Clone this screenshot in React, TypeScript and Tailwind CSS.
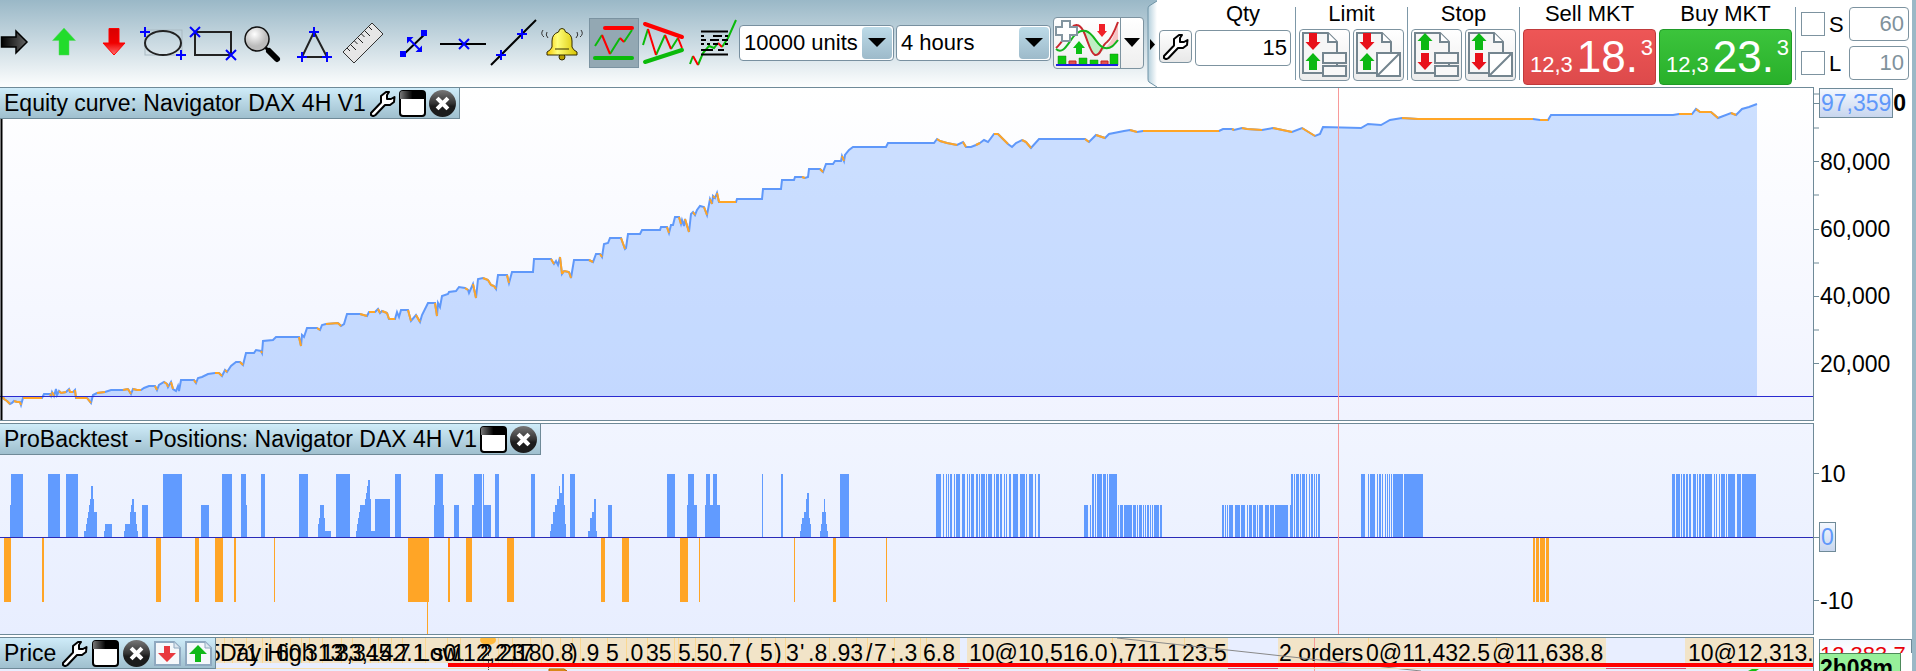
import { useState, type ReactNode } from "react";

type Point = [x: number, y: number, down?: 1];

const PLOT_WIDTH = 1813;
const START_CAPITAL_Y = 396;

// Equity line in plot units, third item marks a losing stretch
const EQUITY: Point[] = [
  [3, 397], [4, 399, 1], [7, 401, 1], [10, 404, 1], [12, 403], [14, 401], [17, 402, 1], [20, 402, 1], [21, 405, 1],
  [23, 398], [42, 398, 1], [44, 394], [50, 394], [51, 396, 1], [52, 392], [54, 396, 1], [56, 389], [57, 395],
  [59, 391], [61, 393, 1], [66, 392, 1], [69, 389], [70, 392, 1], [73, 392, 1], [75, 390], [76, 398, 1],
  [87, 398, 1], [91, 403, 1], [93, 395], [97, 393], [105, 392, 1], [111, 390], [123, 390], [128, 389, 1],
  [131, 394, 1], [133, 389], [137, 390, 1], [141, 390, 1], [144, 388], [149, 386], [155, 386], [157, 390, 1],
  [159, 385], [164, 382], [167, 384, 1], [168, 387, 1], [171, 382], [173, 389, 1], [176, 391], [178, 386],
  [179, 391], [181, 380], [194, 380], [196, 383, 1], [198, 378], [202, 377], [208, 374], [215, 373],
  [219, 373, 1], [222, 376, 1], [225, 370], [227, 372, 1], [231, 366], [236, 362], [240, 362], [243, 365, 1],
  [246, 353], [254, 353], [256, 350], [261, 351], [262, 353, 1], [263, 341], [273, 340], [276, 337], [299, 337],
  [301, 346, 1], [302, 335], [304, 337], [307, 328], [317, 328], [320, 330, 1], [322, 325], [326, 324],
  [338, 323, 1], [341, 326, 1], [344, 324], [347, 314], [360, 314], [367, 316, 1], [369, 312], [375, 312, 1],
  [378, 309], [380, 313, 1], [382, 311], [387, 313, 1], [389, 319, 1], [395, 319, 1], [397, 312], [399, 317],
  [401, 310], [408, 310], [411, 321, 1], [416, 315], [420, 322, 1], [422, 315], [428, 303], [435, 303],
  [437, 316, 1], [438, 303], [440, 307], [442, 296], [448, 294], [449, 292], [456, 291], [459, 287], [465, 288],
  [468, 290, 1], [469, 293], [473, 284], [476, 298, 1], [478, 279], [483, 278], [488, 280, 1], [491, 285, 1],
  [494, 286, 1], [496, 289, 1], [498, 275], [507, 275], [509, 283, 1], [512, 272], [533, 272], [534, 259],
  [551, 259], [554, 264, 1], [556, 261], [558, 265], [560, 257], [562, 274, 1], [564, 271, 1], [569, 272, 1],
  [571, 278, 1], [574, 260], [589, 260], [593, 262, 1], [596, 254], [600, 254], [602, 257, 1], [604, 244],
  [608, 243], [610, 238], [621, 238], [625, 249, 1], [626, 248], [628, 234], [640, 234], [642, 230], [660, 230],
  [661, 227], [667, 227], [669, 233, 1], [671, 225], [673, 225], [675, 217], [679, 217], [681, 224, 1],
  [682, 220], [684, 226], [685, 219], [689, 232, 1], [691, 214], [693, 212], [695, 215, 1], [697, 210],
  [700, 206], [704, 207], [707, 215, 1], [710, 199], [712, 204, 1], [713, 196], [715, 198, 1], [717, 193],
  [719, 202, 1], [736, 202, 1], [737, 199], [762, 199], [763, 189], [781, 189], [782, 180], [794, 180],
  [795, 177], [802, 177], [805, 178, 1], [808, 177], [809, 169], [820, 169], [823, 172, 1], [826, 164],
  [833, 164], [835, 161], [841, 161], [842, 156], [844, 161, 1], [845, 155], [849, 150], [853, 147], [886, 147],
  [888, 143], [934, 143], [937, 139], [940, 141, 1], [947, 143, 1], [957, 145, 1], [963, 142], [966, 147, 1],
  [971, 147], [976, 145], [980, 143, 1], [984, 140], [988, 142], [994, 134], [998, 134, 1], [1004, 140, 1],
  [1008, 144, 1], [1012, 147], [1016, 143], [1022, 140], [1026, 142, 1], [1031, 148, 1], [1039, 139],
  [1085, 139], [1089, 142, 1], [1096, 135], [1105, 138, 1], [1109, 134], [1124, 131], [1130, 130],
  [1137, 132, 1], [1143, 131], [1161, 131, 1], [1219, 131, 1], [1223, 129], [1232, 129], [1234, 130, 1],
  [1242, 128], [1247, 129, 1], [1262, 130, 1], [1273, 128], [1292, 132, 1], [1302, 128], [1315, 136, 1],
  [1320, 134], [1323, 127], [1361, 128], [1368, 124], [1381, 125], [1390, 120], [1402, 118], [1418, 119, 1],
  [1533, 119, 1], [1540, 120], [1548, 120, 1], [1551, 115], [1673, 115], [1679, 114], [1692, 114, 1],
  [1696, 109], [1700, 112, 1], [1711, 112, 1], [1718, 118, 1], [1731, 113], [1736, 115, 1], [1742, 109],
  [1749, 107], [1757, 104],
];

// Position bars: from, to, size
const LONGS: [number, number, number][] = [
  [10, 11, 5], [11, 23, 10], [48, 60, 10], [66, 78, 10],
  [84, 97, 1], [86, 97, 2], [87, 97, 3], [88, 97, 4], [89, 94, 5], [90, 94, 6], [91, 93, 8],
  [104, 112, 1], [105, 112, 2],
  [124, 138, 1], [125, 137, 2], [130, 136, 4], [131, 134, 5], [132, 134, 6],
  [142, 148, 5], [163, 182, 10], [201, 209, 5], [222, 232, 10], [241, 246, 10], [246, 247, 5], [261, 265, 10],
  [299, 308, 10], [318, 325, 2], [319, 325, 3], [320, 324, 5], [325, 331, 1], [336, 350, 10],
  [356, 375, 1], [357, 371, 2], [358, 371, 3], [359, 371, 4], [360, 371, 5], [365, 371, 6], [366, 370, 7],
  [367, 370, 8], [368, 370, 9], [375, 390, 6], [395, 401, 10], [434, 444, 5], [435, 443, 10], [454, 459, 5],
  [472, 482, 5], [474, 482, 10], [483, 484, 10], [484, 491, 5], [495, 499, 10], [531, 535, 10],
  [550, 566, 1], [551, 566, 2], [553, 565, 4], [555, 565, 5], [557, 564, 6], [559, 560, 8], [560, 564, 7],
  [562, 564, 10], [570, 575, 10], [588, 597, 1], [590, 596, 3], [592, 596, 4], [594, 596, 6], [608, 612, 5],
  [667, 675, 10], [687, 697, 5], [688, 694, 10], [705, 720, 5], [706, 710, 10], [713, 717, 10], [762, 763, 10],
  [781, 783, 10], [800, 811, 1], [801, 811, 2], [802, 810, 3], [804, 809, 4], [806, 809, 6], [807, 809, 7],
  [820, 828, 1], [821, 827, 2], [822, 826, 4], [824, 825, 6], [840, 849, 10],
  [936, 941, 10], [943, 944, 10], [946, 947, 10], [948, 949, 10], [950, 952, 10], [954, 955, 10], [956, 960, 10],
  [962, 965, 10], [967, 968, 10], [969, 970, 10], [971, 974, 10], [976, 978, 10], [979, 980, 10], [981, 985, 10],
  [986, 987, 10], [988, 992, 10], [994, 995, 10], [996, 999, 10], [1000, 1002, 10], [1004, 1005, 10],
  [1006, 1007, 10], [1009, 1011, 10], [1013, 1018, 10], [1020, 1025, 10], [1026, 1027, 10], [1029, 1033, 10],
  [1035, 1036, 10], [1038, 1040, 10],
  [1084, 1088, 5], [1090, 1091, 5], [1092, 1094, 10], [1095, 1096, 10], [1097, 1102, 10], [1103, 1106, 10],
  [1107, 1108, 10], [1109, 1117, 10], [1118, 1119, 5], [1120, 1123, 5], [1124, 1132, 5], [1133, 1136, 5],
  [1137, 1138, 5], [1139, 1142, 5], [1143, 1144, 5], [1145, 1146, 5], [1147, 1149, 5], [1150, 1151, 5],
  [1152, 1153, 5], [1154, 1159, 5], [1160, 1162, 5],
  [1222, 1224, 5], [1225, 1226, 5], [1227, 1228, 5], [1229, 1233, 5], [1235, 1240, 5], [1241, 1245, 5],
  [1247, 1248, 5], [1249, 1252, 5], [1253, 1256, 5], [1257, 1258, 5], [1259, 1263, 5], [1265, 1269, 5],
  [1270, 1274, 5], [1275, 1288, 5], [1290, 1291, 5], [1291, 1293, 10], [1294, 1295, 10], [1296, 1299, 10],
  [1300, 1301, 10], [1302, 1305, 10], [1306, 1307, 10], [1309, 1310, 10], [1311, 1313, 10], [1314, 1315, 10],
  [1316, 1317, 10], [1318, 1320, 10],
  [1361, 1365, 10], [1368, 1369, 10], [1370, 1375, 10], [1377, 1378, 10], [1379, 1381, 10], [1382, 1383, 10],
  [1385, 1386, 10], [1387, 1388, 10], [1389, 1390, 10], [1391, 1392, 10], [1393, 1403, 10], [1404, 1423, 10],
  [1672, 1675, 10], [1676, 1680, 10], [1681, 1682, 10], [1683, 1685, 10], [1686, 1688, 10], [1689, 1691, 10],
  [1693, 1696, 10], [1697, 1698, 10], [1699, 1701, 10], [1702, 1704, 10], [1705, 1712, 10], [1714, 1715, 10],
  [1716, 1717, 10], [1719, 1720, 10], [1721, 1725, 10], [1726, 1727, 10], [1728, 1735, 10], [1737, 1741, 10],
  [1742, 1756, 10],
];

const SHORTS: [number, number, number][] = [
  [4, 11, 10], [42, 44, 10], [156, 161, 10], [195, 199, 10], [215, 223, 10], [234, 236, 10], [274, 275, 10],
  [408, 429, 10], [427, 428, 16], [448, 450, 10], [466, 472, 10], [507, 514, 10], [601, 605, 10], [622, 629, 10],
  [680, 688, 10], [699, 700, 10], [794, 795, 10], [833, 836, 10], [886, 887, 10], [1533, 1535, 10],
  [1536, 1539, 10], [1540, 1545, 10], [1546, 1549, 10],
];

const ORDER_LABELS: [number, string][] = [
  [208, "5"], [220, "Day High 12,345.7 Low"], [233, "71"], [264, "i"], [276, "60"], [305, "313"], [336, "33,142.1"],
  [432, "s0."], [452, "112,217"], [480, "2.23"], [516, "180.8"], [570, ")"], [580, ".9"], [606, "5"], [624, ".0"],
  [646, "35"], [678, "5"], [690, ".50"], [722, ".7"], [745, "("], [760, "5"], [774, ")"], [786, "3"], [800, "'"],
  [808, ".8"], [831, ".93"], [866, "/"], [874, "7"], [890, ";"], [898, ".3"], [923, "6.8"], [969, "10@10,516.0"],
  [1110, "),711.1"], [1182, "23.5"], [1279, "2 orders"], [1366, "0@11,432.5"], [1492, "@11,638.8"],
  [1688, "10@12,313."],
];

const ORDER_MARKS = [
  224, 232, 246, 262, 270, 290, 301, 309, 322, 341, 352, 370, 378, 391, 402, 425, 447, 460, 483, 498, 512, 530,
  541, 560, 572, 580, 607, 626, 647, 674, 678, 695, 712, 733, 748, 761, 775, 785, 829, 856, 867, 894, 920, 926,
  1112, 1184, 1368, 1496,
];

/* ---------- icons ---------- */

function Wrench({ size }: { size: number }) {
  return (
    <svg width={size} height={size} viewBox="0 0 27 27" aria-hidden="true">
      <path
        d="M2 23 L12 12.500 V6 L17 2 H20 L18 5 V9 H22 L25.500 7 L25 12 L21 15 H16 L6.500 25 Q4 27 2 25 Z"
        fill="#fff"
        stroke="#000"
        strokeWidth="2"
        strokeLinejoin="round"
      />
    </svg>
  );
}

function WindowIcon() {
  return (
    <svg width="27" height="27" viewBox="0 0 27 27" aria-hidden="true">
      <defs>
        <linearGradient id="winbar">
          <stop offset="0" stopColor="#777" />
          <stop offset=".5" stopColor="#000" />
        </linearGradient>
      </defs>
      <rect x="1" y="1" width="25" height="25" rx="3" fill="#fff" stroke="#000" strokeWidth="2" />
      <path d="M1 9 V3 Q1 1 3 1 H24 Q26 1 26 3 V9 Z" fill="url(#winbar)" />
    </svg>
  );
}

function CloseIcon() {
  return (
    <svg width="27" height="27" viewBox="0 0 27 27" aria-hidden="true">
      <defs>
        <linearGradient id="closebg" x2="0" y2="1">
          <stop offset="0" stopColor="#777" />
          <stop offset=".5" stopColor="#333" />
          <stop offset=".6" stopColor="#1c1c1c" />
        </linearGradient>
      </defs>
      <circle cx="13.500" cy="13.500" r="13.500" fill="url(#closebg)" />
      <path d="M9.500 9.500 L17.500 17.500 M17.500 9.500 L9.500 17.500" stroke="#fff" strokeWidth="4" strokeLinecap="square" />
    </svg>
  );
}

function DocArrow({ up }: { up?: boolean }) {
  return (
    <svg width="27" height="27" viewBox="0 0 27 27" aria-hidden="true">
      <path d="M1 2 H20 L26 8 V25 H1 Z" fill="#f5f8fb" stroke="#8fa9c0" strokeWidth="2" />
      <path d="M20 2 V8 H26" fill="#dde6ee" stroke="#8fa9c0" strokeWidth="1" />
      {up ? (
        <path d="M13 5 L22 14 H16 V22 H10 V14 H4 Z" fill="#10b818" />
      ) : (
        <path d="M13 22 L22 13 H16 V6 H10 V13 H4 Z" fill="#e8383e" />
      )}
    </svg>
  );
}

const cross = (x: number, y: number) => `M${x - 5} ${y} H${x + 5} M${x} ${y - 5} V${y + 5}`;
const saltire = (x: number, y: number) =>
  `M${x - 5} ${y - 5} L${x + 5} ${y + 5} M${x + 5} ${y - 5} L${x - 5} ${y + 5}`;

const TOOLS: { name: string; art: ReactNode }[] = [
  {
    name: "Pointer",
    art: (
      <>
        <defs>
          <linearGradient id="darkarrow">
            <stop offset="0" stopColor="#000" />
            <stop offset="1" stopColor="#666" />
          </linearGradient>
        </defs>
        <path d="M12.500 19 H27 V13 L38 24 L27 35 V29 H12.500 Z" fill="url(#darkarrow)" stroke="#000" strokeWidth="1.500" />
      </>
    ),
  },
  { name: "Up arrow", art: <path d="M25 10 L36.500 22.500 H30 V37 H20 V22.500 H13.500 Z" fill="#22dc2c" stroke="#55d860" strokeWidth=".5" /> },
  {
    name: "Down arrow",
    art: (
      <>
        <defs>
          <linearGradient id="redarrow" x2="0" y2="1">
            <stop offset="0" stopColor="#d80000" />
            <stop offset=".55" stopColor="#f00000" />
            <stop offset="1" stopColor="#ff7070" />
          </linearGradient>
        </defs>
        <path d="M25 37 L36 25 H30 V10.500 H20 V25 H14 Z" fill="url(#redarrow)" stroke="#f00" />
      </>
    ),
  },
  {
    name: "Ellipse",
    art: (
      <>
        <rect x="6" y="12" width="37" height="25" fill="none" stroke="#a9b9c2" />
        <ellipse cx="24" cy="25" rx="18" ry="12" fill="none" stroke="#222" strokeWidth="2" />
        <path d={cross(6, 14) + cross(42, 37)} stroke="#00f" strokeWidth="2" />
      </>
    ),
  },
  {
    name: "Rectangle",
    art: (
      <>
        <rect x="6" y="14" width="36" height="23" fill="none" stroke="#222" strokeWidth="2" />
        <path d={saltire(6, 14) + saltire(42, 37)} stroke="#00f" strokeWidth="2" />
      </>
    ),
  },
  {
    name: "Zoom",
    art: (
      <>
        <defs>
          <radialGradient id="lens" cx=".4" cy=".3">
            <stop offset="0" stopColor="#fff" />
            <stop offset="1" stopColor="#bbb" />
          </radialGradient>
        </defs>
        <path d="M26 29 L30 33" stroke="#000" strokeWidth="3" />
        <path d="M30 33 L38 41" stroke="#000" strokeWidth="6" strokeLinecap="round" />
        <circle cx="18" cy="21" r="12" fill="url(#lens)" stroke="#111" strokeWidth="1.500" />
      </>
    ),
  },
  {
    name: "Triangle",
    art: (
      <>
        <path d="M25 14 L38 39 H13 Z" fill="none" stroke="#222" strokeWidth="2" />
        <path d={cross(25, 14) + cross(13, 39) + cross(38, 39)} stroke="#00f" strokeWidth="2" />
      </>
    ),
  },
  {
    name: "Ruler",
    art: (
      <>
        <path d="M33 5 L44 16 L15 45 L4 34 Z" fill="#e6e6e6" stroke="#333" />
        <path
          d="M8 30 l3 3 M12 27 l5 5 M15.500 23 l3 3 M19 20 l5 5 M22.500 16 l3 3 M26 13 l5 5 M30 9 l3 3"
          stroke="#222"
        />
      </>
    ),
  },
  {
    name: "Segment",
    art: (
      <>
        <path d="M14 37 L36 16" stroke="#000" strokeWidth="2" />
        <path d="M11 33 h6 v6 h-6 Z M32 12 h6 v6 h-6 Z" fill="#00f" />
        <path d="M20 21 L31 32" stroke="#00f" strokeWidth="2" />
        <path d="M18 19 h6.500 l-6.500 6.500 Z M33 34 h-6.500 l6.500 -6.500 Z" fill="#00f" />
      </>
    ),
  },
  {
    name: "Horizontal line",
    art: (
      <>
        <path d="M1 26 H47" stroke="#000" strokeWidth="2" />
        <path d={saltire(25, 26)} stroke="#00f" strokeWidth="2" />
      </>
    ),
  },
  {
    name: "Trend line",
    art: (
      <>
        <path d="M2 47 L47 2" stroke="#000" strokeWidth="2" />
        <path d={cross(33, 16) + cross(12, 37)} stroke="#00f" strokeWidth="2" />
      </>
    ),
  },
  {
    name: "Alert",
    art: (
      <>
        <defs>
          <linearGradient id="bell">
            <stop offset="0" stopColor="#f5c800" />
            <stop offset=".35" stopColor="#ffff7a" />
            <stop offset="1" stopColor="#d8c400" />
          </linearGradient>
        </defs>
        <circle cx="23" cy="39" r="3" fill="#b8a000" stroke="#332b00" />
        <path
          d="M23 10.500 Q26 10.500 26.500 14 Q33 16 33 23 V29 Q34 32 38 34 V37 H8 V34 Q12 32 13 29 V23 Q13 16 19.500 14 Q20 10.500 23 10.500 Z"
          fill="url(#bell)"
          stroke="#332b00"
        />
        <path d="M16 31 H30" stroke="#332b00" />
        <path d="M8 14 Q6 17 9 20 M4 12 Q1 16 5 19 M38 14 Q40 17 37 20 M42 12 Q45 16 41 19" fill="none" stroke="#333" />
      </>
    ),
  },
  {
    name: "Support and resistance",
    art: (
      <>
        <path d="M16 10 H43" stroke="#f00" strokeWidth="4" strokeLinecap="round" />
        <path d="M6 40 H43" stroke="#0aba0a" strokeWidth="4" strokeLinecap="round" />
        <path d="M6 28 L13 17 M21 36 L31 20 M35 24 L43 12" stroke="#0aba0a" strokeWidth="2" />
        <path d="M13 17 L21 36 M31 20 L35 24" stroke="#f00" strokeWidth="2" />
      </>
    ),
  },
  {
    name: "Chart patterns",
    art: (
      <>
        <path d="M4 27 L9 11 M17 37 L26 17 M32 31 L39 20" stroke="#0aba0a" strokeWidth="2" />
        <path d="M9 11 L17 37 M26 17 L32 31 M39 20 L43 30" stroke="#f00" strokeWidth="2" />
        <path d="M6 6 L43 19" stroke="#f00" strokeWidth="4" strokeLinecap="round" />
        <path d="M6 44 L43 32" stroke="#0aba0a" strokeWidth="4" strokeLinecap="round" />
      </>
    ),
  },
  {
    name: "Volume profile",
    art: (
      <>
        <path d="M1 46 L4 38 M9 47 L14 35 L20 28 L25 30 L29 25 M33 29 L39 20 L47 2" fill="none" stroke="#0aba0a" strokeWidth="2" />
        <path d="M4 38 L9 47 M29 25 L33 29" stroke="#f00" strokeWidth="2" />
        <path
          d="M12 13.500 H39 M12 18 H15 M24 18 H33 M36 18 H39 M12 22 H17 M21 22 H30 M33 22 H39 M12 26 H15 M18 26 H21 M24 26 H29 M36 26 H39 M12 32 H24 M29 32 H35 M12 36.500 H39"
          stroke="#000"
          strokeWidth="2"
        />
      </>
    ),
  },
];

function IndicatorArt() {
  return (
    <svg width="66" height="50" viewBox="0 0 66 50" aria-hidden="true">
      <path d="M28 13 C33 11 37 16 41 20 C45 26 48 30 51 31 L42 38 C34 32 34 20 28 13 Z" fill="#bfeec4" />
      <path d="M51 30 C57 25 60 18 64 5 V23 C60 28 56 31 51 30 Z" fill="#f7c4c4" />
      <path d="M2 30 C10 24 16 6 23 7 C32 8 34 34 41 37 C47 38 47 28 53 24 C58 20 61 12 64 4" fill="none" stroke="#c8282e" strokeWidth="2" />
      <path d="M2 31 C8 36 12 29 17 22 C22 14 27 12 32 13 C40 15 44 30 51 30 C57 31 60 27 64 22" fill="none" stroke="#14b41c" strokeWidth="2" />
      <path d="M8 3 H16 V9 H23 V17 H16 V23 H8 V17 H2 V9 H8 Z" fill="#fff" stroke="#8395a0" strokeWidth="2" />
      <path d="M25 23 L31 30 H28 V36 H22 V30 H19 Z" fill="#0cc014" />
      <path d="M48 19 L53 13 H51 V6 H45 V13 H43 Z" fill="#f02028" />
      <path d="M4 38 h8 v9 h-8 Z M25 40 h8 v7 h-8 Z M36 42 h8 v5 h-8 Z M56 36 h8 v11 h-8 Z" fill="#0cc80c" stroke="#1a8a1a" strokeWidth=".5" />
      <path d="M15 43 h7 v4 h-7 Z M47 43 h7 v4 h-7 Z" fill="#e05050" stroke="#c02020" />
      <path d="M2 47 H64" stroke="#2020e0" strokeWidth="2" />
    </svg>
  );
}

function OrderArt({ kind, split }: { kind: "limit" | "stop"; split?: boolean }) {
  const arrow = "M8 0 L15.500 8 H12 V17 H4 V8 H0.500 Z";
  return (
    <svg width="49" height="50" viewBox="1 1 49 50" aria-hidden="true">
      <path d="M4 4 H29 L38 13 V44 H4 Z" fill="#f6f6f6" stroke="#74858f" strokeWidth="2" />
      <path d="M29 4 V13 H38" fill="#fff" stroke="#74858f" strokeWidth="2" />
      <path d={arrow} fill={kind === "stop" ? "#0cb814" : "#e8101a"} transform={kind === "stop" ? "translate(6 4)" : "translate(22 21) rotate(180)"} />
      <path d={arrow} fill={kind === "stop" ? "#e8101a" : "#0cb814"} transform={kind === "stop" ? "translate(22 41) rotate(180)" : "translate(6 24)"} />
      {split ? (
        <path d="M24 24 H47 V47 H24 Z M24 47 L47 24" fill="#fff" stroke="#74858f" strokeWidth="2" />
      ) : (
        <path d="M24 24 H47 V34 H24 Z M24 37 H47 V47 H24 Z" fill="#f8f8f8" stroke="#74858f" strokeWidth="2" />
      )}
    </svg>
  );
}

/* ---------- toolbar ---------- */

function Dropdown({ label, options }: { label: string; options: string[] }) {
  return (
    <div className="relative mr-0.5 w-[155px] shrink-0">
      <select
        aria-label={label}
        className="h-9 w-full appearance-none rounded border border-[#7890a0] bg-white pl-1 text-[22px] leading-8 text-black"
      >
        {options.map((o) => (
          <option key={o}>{o}</option>
        ))}
      </select>
      <span className="pointer-events-none absolute inset-y-0.5 right-0.5 flex w-[30px] items-center justify-center rounded-sm bg-linear-to-b from-[#bddbe8] to-[#9dbaca]">
        <svg width="18" height="9" viewBox="0 0 18 9" aria-hidden="true">
          <path d="M0 0 H18 L9 9 Z" />
        </svg>
      </span>
    </div>
  );
}

function Separator() {
  return <div className="mx-[3px] mt-[7px] h-[73px] w-px bg-[#7d98a8]" />;
}

function OrderGroup({ title, kind }: { title: string; kind: "limit" | "stop" }) {
  return (
    <div>
      <div className="text-center leading-7">{title}</div>
      <div className="mt-px flex gap-[3px]">
        {[false, true].map((split) => (
          <button
            key={String(split)}
            aria-label={`${title} order${split ? " with bracket" : ""}`}
            className="flex h-[52px] w-[51px] items-center justify-center rounded border border-[#7d93a0] bg-linear-to-b from-white to-[#ececec]"
          >
            <OrderArt kind={kind} split={split} />
          </button>
        ))}
      </div>
    </div>
  );
}

function DealButton({ title, big, side }: { title: string; big: string; side: "sell" | "buy" }) {
  return (
    <div>
      <div className="text-center leading-7">{title}</div>
      <button
        aria-label={title}
        className={`mt-px flex h-14 w-[133px] items-baseline rounded border pl-1.5 text-white ${
          side === "sell"
            ? "border-[#c03a3c] bg-linear-to-b from-[#ee5656] to-[#dd4a4b]"
            : "border-[#1f9a28] bg-linear-to-b from-[#3cc43c] to-[#28b02a]"
        }`}
      >
        <span>12,3</span>
        <span className="ml-1 text-[44px] leading-[54px]">{big}</span>
        <span className="ml-auto mr-0.5 self-start leading-9">3</span>
      </button>
    </div>
  );
}

function TradingPanel() {
  const [qty, setQty] = useState("15");
  return (
    <div className="flex shrink-0 items-start bg-white">
      <svg width="10" height="87" viewBox="0 0 10 87" className="shrink-0" aria-hidden="true">
        <defs>
          <linearGradient id="handle">
            <stop offset="0" stopColor="#b4cfdc" />
            <stop offset="1" stopColor="#fff" />
          </linearGradient>
          <linearGradient id="behind" x2="0" y2="1">
            <stop offset="0" stopColor="#9ab8c7" />
            <stop offset="1" stopColor="#fdfefe" />
          </linearGradient>
        </defs>
        <rect width="10" height="87" fill="url(#behind)" />
        <path d="M10 1 L2 6 Q1 7 1 9 V79 Q1 81 2 82 L10 87" fill="url(#handle)" stroke="#6f93a6" />
        <path d="M3 39 L8 44.500 L3 50 Z" />
      </svg>
      <button
        aria-label="Order settings"
        className="ml-0.5 mt-[30px] flex h-[33px] w-[33px] shrink-0 items-center justify-center rounded border border-[#7d93a0] bg-linear-to-b from-white to-[#e8e8e8]"
      >
        <Wrench size={27} />
      </button>
      <label className="ml-[3px] mr-px block w-24">
        <span className="block text-center leading-7">Qty</span>
        <input
          value={qty}
          onChange={(e) => setQty(e.target.value)}
          className="mt-0.5 h-9 w-full rounded border border-[#7d93a0] bg-white pr-[3px] text-right"
        />
      </label>
      <Separator />
      <OrderGroup title="Limit" kind="limit" />
      <Separator />
      <OrderGroup title="Stop" kind="stop" />
      <Separator />
      <div className="flex gap-[3px]">
        <DealButton title="Sell MKT" big="18." side="sell" />
        <DealButton title="Buy MKT" big="23." side="buy" />
      </div>
      <Separator />
      <div className="ml-0.5 mr-[3px] mt-[7px] flex flex-col gap-[5px]">
        {[
          ["S", "60"],
          ["L", "10"],
        ].map(([name, points]) => (
          <div key={name} className="flex h-[34px] items-center">
            <input
              id={`use-${name}`}
              type="checkbox"
              className="h-6 w-6 appearance-none border border-[#7d93a0] bg-white checked:bg-[#9bb9c8]"
            />
            <label htmlFor={`use-${name}`} className="w-6 pl-1">
              {name}
            </label>
            <input
              aria-label={`${name} distance`}
              defaultValue={points}
              className="h-[34px] w-[60px] rounded border border-[#7d93a0] bg-white pr-1 text-right text-[#7f929c]"
            />
          </div>
        ))}
      </div>
    </div>
  );
}

function Toolbar() {
  const [active, setActive] = useState("Support and resistance");
  return (
    <header className="flex h-[87px] shrink-0 bg-linear-to-b from-[#9ab8c7] to-[#fdfefe] text-[22px] text-black">
      <div className="flex flex-1 items-center pb-0.5">
        {TOOLS.map((tool, i) => (
          <button
            key={tool.name}
            aria-label={tool.name}
            onClick={() => setActive(tool.name)}
            className={`h-[50px] shrink-0 ${i === 0 ? "w-[39px]" : "w-[50px]"} ${
              active === tool.name ? "border border-[#7b93a1] bg-[#93a8b3]" : ""
            }`}
          >
            <svg
              viewBox={i === 0 ? "11 0 39 50" : active === tool.name ? "1 1 48 48" : "0 0 50 50"}
              className="block h-full w-full"
              aria-hidden="true"
            >
              {tool.art}
            </svg>
          </button>
        ))}
        <Dropdown label="History" options={["10000 units", "5000 units", "1000 units"]} />
        <Dropdown label="Timeframe" options={["4 hours", "1 hour", "1 day"]} />
        <div className="flex h-[52px] shrink-0 rounded border border-[#7d93a0] bg-linear-to-b from-white to-[#eee]">
          <button aria-label="Add indicator" className="border-r border-[#7d93a0]">
            <IndicatorArt />
          </button>
          <button aria-label="Indicator menu" className="flex w-[22px] items-center justify-center">
            <svg width="16" height="9" viewBox="0 0 16 9" aria-hidden="true">
              <path d="M0 0 H16 L8 9 Z" />
            </svg>
          </button>
        </div>
      </div>
      <TradingPanel />
    </header>
  );
}

/* ---------- chart panels ---------- */

function PanelTag({ title, children }: { title: string; children: ReactNode }) {
  return (
    <div className="absolute left-0 top-0 flex h-[31px] items-center gap-[3px] border-b border-r border-[#6f8a98] bg-linear-to-b from-[#cfecf9] to-[#9fbfce] pl-1 pr-[3px] text-[23px] leading-7 text-black">
      <h2>{title}</h2>
      {children}
    </div>
  );
}

function WindowButtons({ wrench }: { wrench?: boolean }) {
  return (
    <>
      {wrench && (
        <button aria-label="Settings">
          <Wrench size={27} />
        </button>
      )}
      <button aria-label="Detach">
        <WindowIcon />
      </button>
      <button aria-label="Close">
        <CloseIcon />
      </button>
    </>
  );
}

function AxisLabel({ at, children }: { at: number; children: ReactNode }) {
  return (
    <div className="absolute left-0 flex -translate-y-1/2 items-center" style={{ top: `${at * 100}%` }}>
      <span className="h-px w-[5px] bg-[#6f8a98]" />
      {children}
    </div>
  );
}

const equityAt = (v: number) => (102200 - v) / 99250;
const positionAt = (v: number) => (18 - v) / 33.400;

function EquityPanel() {
  const line = EQUITY.map(([x, y]) => `${x},${y}`).join(" ");
  const down = EQUITY.map(([x, y, d], i) => (d && i ? `M${EQUITY[i - 1][0]} ${EQUITY[i - 1][1]}L${x} ${y}` : "")).join("");
  const last = EQUITY[EQUITY.length - 1][0];
  return (
    <section className="flex min-h-0 flex-1">
      <div className="relative min-w-0 flex-1 border-y border-r border-[#6f8a98] bg-linear-to-b from-white to-[#f0f3ff]">
        <svg viewBox="0 88 1813 332" preserveAspectRatio="none" className="absolute h-full w-full">
          <polygon points={`3,${START_CAPITAL_Y} ${line} ${last},${START_CAPITAL_Y}`} fill="#5f9aff" fillOpacity=".31" />
          <polyline points={line} fill="none" stroke="#5f98fa" strokeWidth="2" />
          <path d={down} fill="none" stroke="#ffa526" strokeWidth="2" />
          <path d={`M0 ${START_CAPITAL_Y + 0.500} H${PLOT_WIDTH}`} stroke="#2a2ad0" />
          <path d="M1.500 118 V420" stroke="#000" strokeWidth="2" />
          <path d="M1338.500 88 V420" stroke="#f79a9a" />
        </svg>
        <PanelTag title="Equity curve: Navigator DAX 4H V1">
          <WindowButtons wrench />
        </PanelTag>
      </div>
      <div className="relative w-[98px] shrink-0 text-[23px] leading-7 text-black">
        {[100000, 90000, 70000, 50000, 30000].map((v) => (
          <AxisLabel key={v} at={equityAt(v)}>
            {null}
          </AxisLabel>
        ))}
        {[80000, 60000, 40000, 20000].map((v) => (
          <AxisLabel key={v} at={equityAt(v)}>
            <span className="pl-px">{v.toLocaleString("en-US")}</span>
          </AxisLabel>
        ))}
        <AxisLabel at={equityAt(97359)}>
          <span className="border border-[#6f8a98] bg-linear-to-b from-[#f4f8ff] to-[#c8d6ee] px-px text-[#5f98fa]">97,359</span>
          <b>0</b>
        </AxisLabel>
      </div>
    </section>
  );
}

function PositionsPanel() {
  const zero = 537;
  const unit = 6.350;
  return (
    <section className="flex min-h-0 flex-1">
      <div className="relative min-w-0 flex-1 border-y border-r border-[#6f8a98] bg-linear-to-b from-[#f1f5ff] to-[#e8eeff]">
        <svg
          viewBox="0 424 1813 210"
          preserveAspectRatio="none"
          shapeRendering="crispEdges"
          className="absolute h-full w-full"
        >
          {LONGS.map(([a, b, v], i) => (
            <rect key={i} x={a} y={zero - v * unit} width={b - a} height={v * unit} fill="#619bff" />
          ))}
          {SHORTS.map(([a, b, v], i) => (
            <rect key={i} x={a} y={zero} width={b - a} height={v * unit + 1} fill="#ffa526" />
          ))}
          <path d={`M0 ${zero + 0.500} H${PLOT_WIDTH}`} stroke="#2a2ab8" />
          <path d="M1338.500 424 V634" stroke="#f79a9a" />
        </svg>
        <PanelTag title="ProBacktest - Positions: Navigator DAX 4H V1">
          <WindowButtons />
        </PanelTag>
      </div>
      <div className="relative w-[98px] shrink-0 text-[23px] leading-7 text-black">
        <AxisLabel at={positionAt(10)}>
          <span className="pl-px">10</span>
        </AxisLabel>
        <AxisLabel at={positionAt(0)}>
          <span className="border border-[#6f8a98] bg-linear-to-b from-[#f4f8ff] to-[#c8d6ee] px-px text-[#5f98fa]">0</span>
        </AxisLabel>
        <AxisLabel at={positionAt(-10)}>
          <span className="pl-px">-10</span>
        </AxisLabel>
      </div>
    </section>
  );
}

function PricePanel() {
  return (
    <section className="flex h-[34px] shrink-0 overflow-hidden">
      <div className="relative min-w-0 flex-1 overflow-hidden border-r border-t border-[#6f8a98] bg-[#e8eeff]">
        <svg viewBox="0 638 1813 33" preserveAspectRatio="none" className="absolute h-[33px] w-full">
          <path d="M215 638 H960 V663 H215 Z M967 638 H1228 V663 H967 Z M1278 638 H1606 V663 H1278 Z M1685 638 H1813 V663 H1685 Z" fill="#f2e4c8" />
          {ORDER_MARKS.map((x) => (
            <path key={x} d={`M${x + 0.500} 638 V663`} stroke="#fad892" />
          ))}
          <ellipse cx="488" cy="640" rx="8" ry="5" fill="#ffb93c" />
          <path d="M488.500 645 V671" stroke="#444" strokeDasharray="4 3" />
          <path d="M1314.500 638 V671" stroke="#f79a9a" />
        </svg>
        {ORDER_LABELS.map(([x, text]) => (
          <span
            key={x}
            className="absolute top-0 text-[23px] leading-[30px] whitespace-nowrap text-black"
            style={{ left: `${(x / PLOT_WIDTH) * 100}%` }}
          >
            {text}
          </span>
        ))}
        <svg viewBox="0 638 1813 33" preserveAspectRatio="none" className="absolute h-[33px] w-full">
          <path d="M1117 638 L1421 671" stroke="#888" />
          <path d="M215 668.500 H1813" stroke="#f6dfae" />
          <path d="M448 665 H1813" stroke="#f00" strokeWidth="4" />
          <path d="M549 669 H564 L567 671 H549 Z" fill="#ffb030" stroke="#b06000" />
          <path d="M958 668.500 H969 M1228 668.500 H1278 M1606 668.500 H1686" stroke="#e04a6a" />
          <path d="M1748 671 L1752 669 H1759 L1756 671 Z" fill="#10c010" />
        </svg>
        <PanelTag title="Price">
          <div className="flex items-center gap-1 pl-0.5">
            <WindowButtons wrench />
            <button aria-label="Sell from chart">
              <DocArrow />
            </button>
            <button aria-label="Buy from chart">
              <DocArrow up />
            </button>
          </div>
        </PanelTag>
      </div>
      <div className="w-[98px] shrink-0 pl-[5px] pt-0.5 text-[22px]">
        <div className="h-3.5 overflow-hidden border border-b-0 border-[#6f8a98] bg-linear-to-b from-[#f4f8ff] to-white leading-[30px] text-red-600">
          12,383.7
        </div>
        <div className="w-[82px] border border-[#4d8a5a] bg-[#97f09a] text-[23px] leading-7 font-bold text-black">2h08m</div>
      </div>
    </section>
  );
}

export default function App() {
  return (
    <main className="flex h-screen flex-col gap-0.5 overflow-hidden border-r-4 border-[#9bb8c6] bg-white font-['Liberation_Sans',Arial,sans-serif]">
      <div className="flex min-h-0 flex-[421] flex-col">
        <Toolbar />
        <EquityPanel />
      </div>
      <div className="flex min-h-0 flex-[212] flex-col">
        <PositionsPanel />
      </div>
      <PricePanel />
    </main>
  );
}
